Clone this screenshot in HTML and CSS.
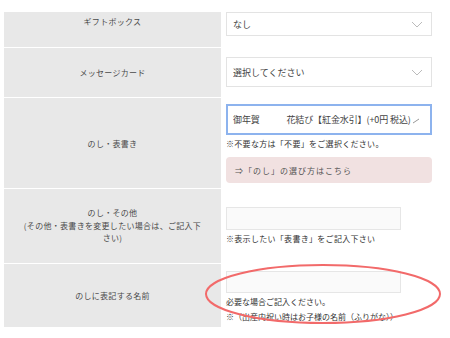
FILE: index.html
```html
<!DOCTYPE html>
<html lang="ja">
<head>
	<meta charset="UTF-8">
	<title>のし設定</title>
	<link rel="stylesheet" href="styles.css">
</head>
<body>
<main class="page">
	<div class="form">
		<div class="label label-top">ギフトボックス</div>
		<div class="field field-first">
			<div class="select select-short">
				<span class="value">なし</span>
				<svg class="chevron" width="12" height="7" viewBox="0 0 12 7"><path d="M1 1 L6 6 L11 1" fill="none" stroke="#bbb" stroke-width="1"/></svg>
			</div>
		</div>

		<div class="label">メッセージカード</div>
		<div class="field field-card">
			<div class="select">
				<span class="value">選択してください</span>
				<svg class="chevron" width="12" height="7" viewBox="0 0 12 7"><path d="M1 1 L6 6 L11 1" fill="none" stroke="#bbb" stroke-width="1"/></svg>
			</div>
		</div>

		<div class="label">のし・表書き</div>
		<div class="field field-noshi">
			<div class="select select-focus">
				<span class="value value-full">御年賀　　　花結び【紅金水引】(+0円 税込)</span>
				<svg class="chevron chevron-small" width="8" height="6" viewBox="0 0 8 6"><path d="M1 5 L7 1" fill="none" stroke="#999" stroke-width="1"/></svg>
			</div>
			<p class="note">※不要な方は「不要」をご選択ください。</p>
			<div class="guide">⇒「のし」の選び方はこちら</div>
		</div>

		<div class="label label-multi">のし・その他<br>(その他・表書きを変更したい場合は、ご記入下さい)</div>
		<div class="field field-other">
			<div class="input"></div>
			<p class="note">※表示したい「表書き」をご記入下さい</p>
		</div>

		<div class="label">のしに表記する名前</div>
		<div class="field field-name">
			<div class="input input-name"></div>
			<p class="note note-tight">必要な場合ご記入ください。<br>※（出産内祝い時はお子様の名前（ふりがな））</p>
		</div>
	</div>

	<!-- red hand-drawn mark over the name field -->
	<svg class="mark" width="244" height="64" viewBox="0 0 244 64">
		<ellipse cx="120" cy="32" rx="117" ry="29" fill="none" stroke="#f26a6a" stroke-width="2"/>
	</svg>
</main>
</body>
</html>
```

FILE: styles.css
```css
body{
	margin: 0;
	background: #fff;
	font-family: "Noto Sans CJK JP", "Noto Sans", sans-serif;
	color: #444;
}

.page{
	position: relative;
	width: 450px;
	height: 338px;
	overflow: hidden;
}

.form{
	display: grid;
	grid-template-columns: 217px 1fr;
	grid-template-rows: 35px 49px 90px 74px 63px;
	column-gap: 5px;
	row-gap: 1px;
	margin: 12px 0 0 4px;
}

.label{
	background: #e8e8e8;
	color: #4a4a4a;
	font-size: 8px;
	letter-spacing: 0.3px;
	display: flex;
	align-items: center;
	justify-content: center;
	text-align: center;
	padding: 0 20px;
}

.label-top{
	align-items: flex-start;
	padding-top: 4px;
}

.label-multi{
	line-height: 12.5px;
	padding: 0 17px;
}

.field{
	display: flex;
	flex-direction: column;
	align-items: flex-start;
}

.field-card{ padding-top: 9px; }
.field-noshi{ padding-top: 6px; }
.field-other{ padding-top: 18px; }
.field-name{ padding-top: 7px; }

.select{
	box-sizing: border-box;
	width: 206px;
	height: 30px;
	border: 1px solid #e3e3e3;
	background: #fff;
	display: flex;
	align-items: center;
	padding: 0 8px 0 6px;
	font-size: 9px;
	color: #444;
}

.select-short{
	height: 24px;
}

.select-focus{
	height: 31px;
	border: 2px solid #8db3ee;
	padding: 0 4px 0 5px;
	font-size: 9px;
}

.value{
	flex: 1;
	white-space: nowrap;
	overflow: hidden;
}

.value-full{
	flex: none;
	letter-spacing: -0.1px;
}

.chevron{
	margin-left: 4px;
	flex: none;
}

.chevron-small{
	margin-left: 1px;
	margin-top: 2px;
}

.note{
	margin: 3px 0 0 0;
	font-size: 8px;
	letter-spacing: 0.3px;
	line-height: 12px;
	color: #333;
}

.note-tight{
	margin-top: 1px;
	line-height: 15px;
	letter-spacing: 0;
}

.guide{
	box-sizing: border-box;
	width: 206px;
	height: 26px;
	margin-top: 7px;
	background: #f1e1e1;
	border-radius: 4px;
	display: flex;
	align-items: center;
	padding-left: 9px;
	font-size: 8px;
	letter-spacing: 1px;
	color: #555;
}

.input{
	box-sizing: border-box;
	width: 175px;
	height: 23px;
	border: 1px solid #e6e6e6;
	background: #fafafa;
}

.input-name{
	height: 22px;
}

.mark{
	position: absolute;
	left: 203px;
	top: 262px;
}
```
